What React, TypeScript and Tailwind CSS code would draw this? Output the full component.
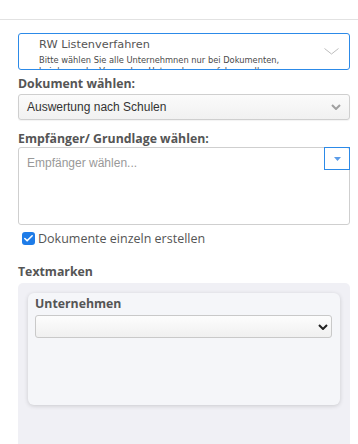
import { Check } from 'lucide-react';

const openSans = { fontFamily: '"Open Sans", "Noto Sans", sans-serif' };
const arial = { fontFamily: '"Liberation Sans", Arial, sans-serif' };
const dejavu = { fontFamily: '"DejaVu Sans", Verdana, sans-serif' };

function Chevron({ className }: { className?: string }) {
  return (
    <svg width="10" height="6" viewBox="0 0 10 6" className={className}>
      <path d="M1 1 L5 5 L9 1" fill="none" stroke="currentColor" strokeWidth="2" />
    </svg>
  );
}

export default function App() {
  return (
    <div className="w-[358px] h-[444px] overflow-hidden bg-white text-[#555]" style={openSans}>
      {/* top divider */}
      <div className="h-[20px] border-b border-[#e2e2e2]" />

      <div className="pl-[18px] pr-[8px] pt-[13px]">
        {/* template picker */}
        <div className="relative h-[37px] overflow-hidden rounded-[3px] border border-[#2c8ae8] pl-[20px] pt-[3px]" style={dejavu}>
          <div className="text-[11.3px] leading-[15px] text-[#555]">RW Listenverfahren</div>
          <div className="mt-[3px] text-[8.3px] leading-[10px] text-[#4a4a4a] whitespace-nowrap">
            Bitte wählen Sie alle Unternehmnen nur bei Dokumenten,
          </div>
          <div className="mt-[1px] text-[8.3px] leading-[10px] text-[#4a4a4a] whitespace-nowrap">
            bei denen der Versand an Unternehmen erfolgen soll.
          </div>
          <svg width="15" height="7" viewBox="0 0 15 7" className="absolute right-[10px] top-[14px] text-[#bdbdbd]">
            <path d="M0.5 0.5 L7.5 6 L14.5 0.5" fill="none" stroke="currentColor" strokeWidth="1" />
          </svg>
        </div>

        {/* Dokument */}
        <div className="mt-[6px] text-[12.3px] font-bold leading-[16px]">Dokument wählen:</div>
        <div className="mt-[2px] flex h-[26px] items-center justify-between rounded-[3px] border border-[#cfcfcf] bg-gradient-to-b from-[#fbfbfb] to-[#f1f1f1] pl-[8px] pr-[8px] shadow-[0_1px_1px_rgba(0,0,0,0.05)]">
          <span className="text-[12px] text-[#333]" style={arial}>Auswertung nach Schulen</span>
          <Chevron className="text-[#a0a0a0]" />
        </div>

        {/* Empfänger */}
        <div className="mt-[11px] text-[12.3px] font-bold leading-[16px]">Empfänger/ Grundlage wählen:</div>
        <div className="relative h-[78px] rounded-[3px] border border-[#cfcfcf] pl-[8px] pt-[8px]">
          <div className="text-[12px] leading-[14px] text-[#999]" style={arial}>Empfänger wählen...</div>
          <div className="absolute -right-px -top-px flex h-[23px] w-[26px] items-start justify-center border border-[#2c8ae8] pt-[9px]">
            <svg width="7" height="4" viewBox="0 0 7 4">
              <path d="M0 0 L7 0 L3.5 4 Z" fill="#5b9ce8" />
            </svg>
          </div>
        </div>

        {/* checkbox */}
        <div className="mt-[7px] flex h-[13px] items-center pl-[4px]">
          <span className="flex h-[13px] w-[13px] items-center justify-center rounded-[3px] bg-[#1e7ce8]">
            <Check size={11} strokeWidth={3.5} className="text-white" />
          </span>
          <span className="ml-[3px] text-[12.5px] leading-[13px]">Dokumente einzeln erstellen</span>
        </div>

        {/* Textmarken */}
        <div className="mt-[19px] text-[12.3px] font-bold leading-[16px]">Textmarken</div>
        <div className="mt-[3px] h-[170px] rounded-t-[5px] bg-[#f0f0f5] px-[10px] pt-[10px]">
          <div className="h-[112px] rounded-[6px] bg-[#f5f6f9] pl-[7px] pr-[8px] pt-[3px] shadow-[0_1px_4px_rgba(0,0,0,0.16)]">
            <div className="text-[12.3px] font-bold leading-[16px]">Unternehmen</div>
            <div className="mt-[3px] flex h-[23px] items-center justify-end rounded-[3px] border border-[#c9c9c9] bg-gradient-to-b from-[#fdfdfd] to-[#f0f0f0] pr-[3px]">
              <Chevron className="text-[#222]" />
            </div>
          </div>
        </div>
      </div>
    </div>
  );
}
